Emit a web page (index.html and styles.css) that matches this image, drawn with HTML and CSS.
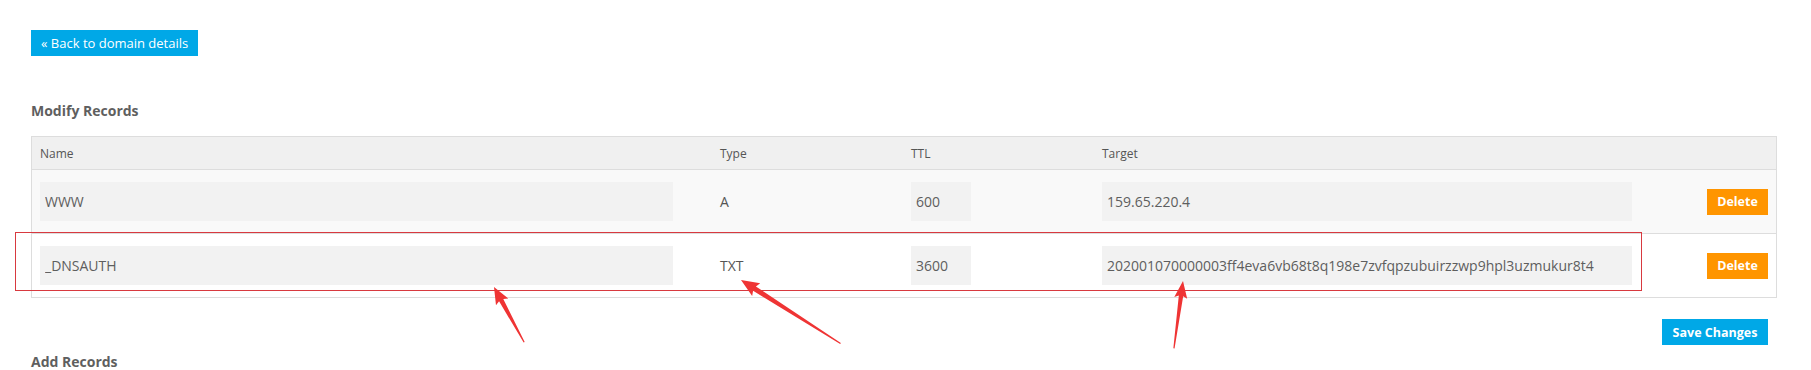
FILE: index.html
```html
<!DOCTYPE html>
<html lang="en">
<head>
    <meta charset="UTF-8">
    <title>Modify Records</title>
    <link rel="stylesheet" href="styles.css">
</head>
<body>
    <div class="page">
        <a class="btn btn-back" href="#">&laquo; Back to domain details</a>

        <h3 class="section-title">Modify Records</h3>

        <div class="records">
            <div class="rec-row rec-head">
                <div class="cell">Name</div>
                <div class="cell">Type</div>
                <div class="cell">TTL</div>
                <div class="cell">Target</div>
                <div class="cell"></div>
            </div>
            <div class="rec-row odd">
                <div class="cell"><input class="field field-name" type="text" value="WWW"></div>
                <div class="cell type">A</div>
                <div class="cell"><input class="field field-ttl" type="text" value="600"></div>
                <div class="cell"><input class="field field-target" type="text" value="159.65.220.4"></div>
                <div class="cell cell-action"><button class="btn btn-delete">Delete</button></div>
            </div>
            <div class="rec-row">
                <div class="cell"><input class="field field-name" type="text" value="_DNSAUTH"></div>
                <div class="cell type">TXT</div>
                <div class="cell"><input class="field field-ttl" type="text" value="3600"></div>
                <div class="cell"><input class="field field-target" type="text" value="202001070000003ff4eva6vb68t8q198e7zvfqpzubuirzzwp9hpl3uzmukur8t4"></div>
                <div class="cell cell-action"><button class="btn btn-delete">Delete</button></div>
            </div>
        </div>

        <div class="actions">
            <button class="btn btn-save">Save Changes</button>
        </div>

        <h3 class="section-title add-title">Add Records</h3>

        <!-- marcas de la captura -->
        <svg class="annotations" width="1811" height="370" viewBox="0 0 1811 370">
            <rect x="15.5" y="232.5" width="1626" height="58" fill="none" stroke="#d8393f" stroke-width="1"/>
            <g fill="#ef3434">
                <polygon transform="translate(494 287) rotate(-28.6)" points="0,0 7,17 2.4,15 0.6,63 -0.6,63 -2.4,15 -7,17"/>
                <polygon transform="translate(741 280) rotate(-57.5)" points="0,0 7.5,18 2.6,16 0.6,118 -0.6,118 -2.6,16 -7.5,18"/>
                <polygon transform="translate(1183 281) rotate(7.65)" points="0,0 6.5,17 2.2,15 0.6,68 -0.6,68 -2.2,15 -6.5,17"/>
            </g>
        </svg>
    </div>
</body>
</html>
```

FILE: styles.css
```css
body {
    margin: 0;
    background: #fff;
    font-family: 'Open Sans', 'Liberation Sans', sans-serif;
    color: #555;
}

.page {
    position: relative;
    width: 1811px;
    height: 370px;
    padding: 30px 34px 0 31px;
    box-sizing: border-box;
    overflow: hidden;
}

.btn {
    display: inline-block;
    border: 0;
    margin: 0;
    color: #fff;
    font-family: 'Open Sans', 'Liberation Sans', sans-serif;
    text-decoration: none;
    cursor: pointer;
}

.btn-back {
    height: 26px;
    line-height: 26px;
    padding: 0 10px;
    font-size: 13px;
    background: #00a8e7;
}

.section-title {
    margin: 46px 0 16px;
    font-size: 14px;
    line-height: 18px;
    font-weight: 700;
    color: #5f5f5f;
}

.add-title {
    margin: 8px 0 0;
}

.records {
    border: 1px solid #ddd;
}

.rec-row {
    display: grid;
    grid-template-columns: 680px 191px 191px 556px 1fr;
    align-items: center;
    height: 63px;
    border-top: 1px solid #ddd;
}

.rec-row.rec-head {
    height: 32px;
    border-top: 0;
    background: #f0f0f0;
    font-size: 12px;
}

.rec-row.odd {
    background: #f9f9f9;
}

.cell {
    padding-left: 8px;
}

.type {
    font-size: 14px;
    color: #555;
}

.cell-action {
    display: flex;
    justify-content: flex-end;
    padding-right: 8px;
}

.field {
    display: block;
    height: 39px;
    box-sizing: border-box;
    padding: 0 5px;
    border: 0;
    outline: none;
    background: #f2f2f2;
    font-family: 'Open Sans', 'Liberation Sans', sans-serif;
    font-size: 14px;
    color: #5e5e5e;
}

.field-name {
    width: 633px;
}

.field-ttl {
    width: 60px;
}

.field-target {
    width: 530px;
}

.btn-delete {
    width: 61px;
    height: 26px;
    padding: 0;
    font-size: 12.5px;
    font-weight: 700;
    background: #ff9500;
}

.actions {
    display: flex;
    justify-content: flex-end;
    margin-top: 21px;
    padding-right: 9px;
}

.btn-save {
    width: 106px;
    height: 26px;
    padding: 0;
    font-size: 12.5px;
    font-weight: 700;
    background: #00a8e7;
}

.annotations {
    position: absolute;
    top: 0;
    left: 0;
    pointer-events: none;
}
```
